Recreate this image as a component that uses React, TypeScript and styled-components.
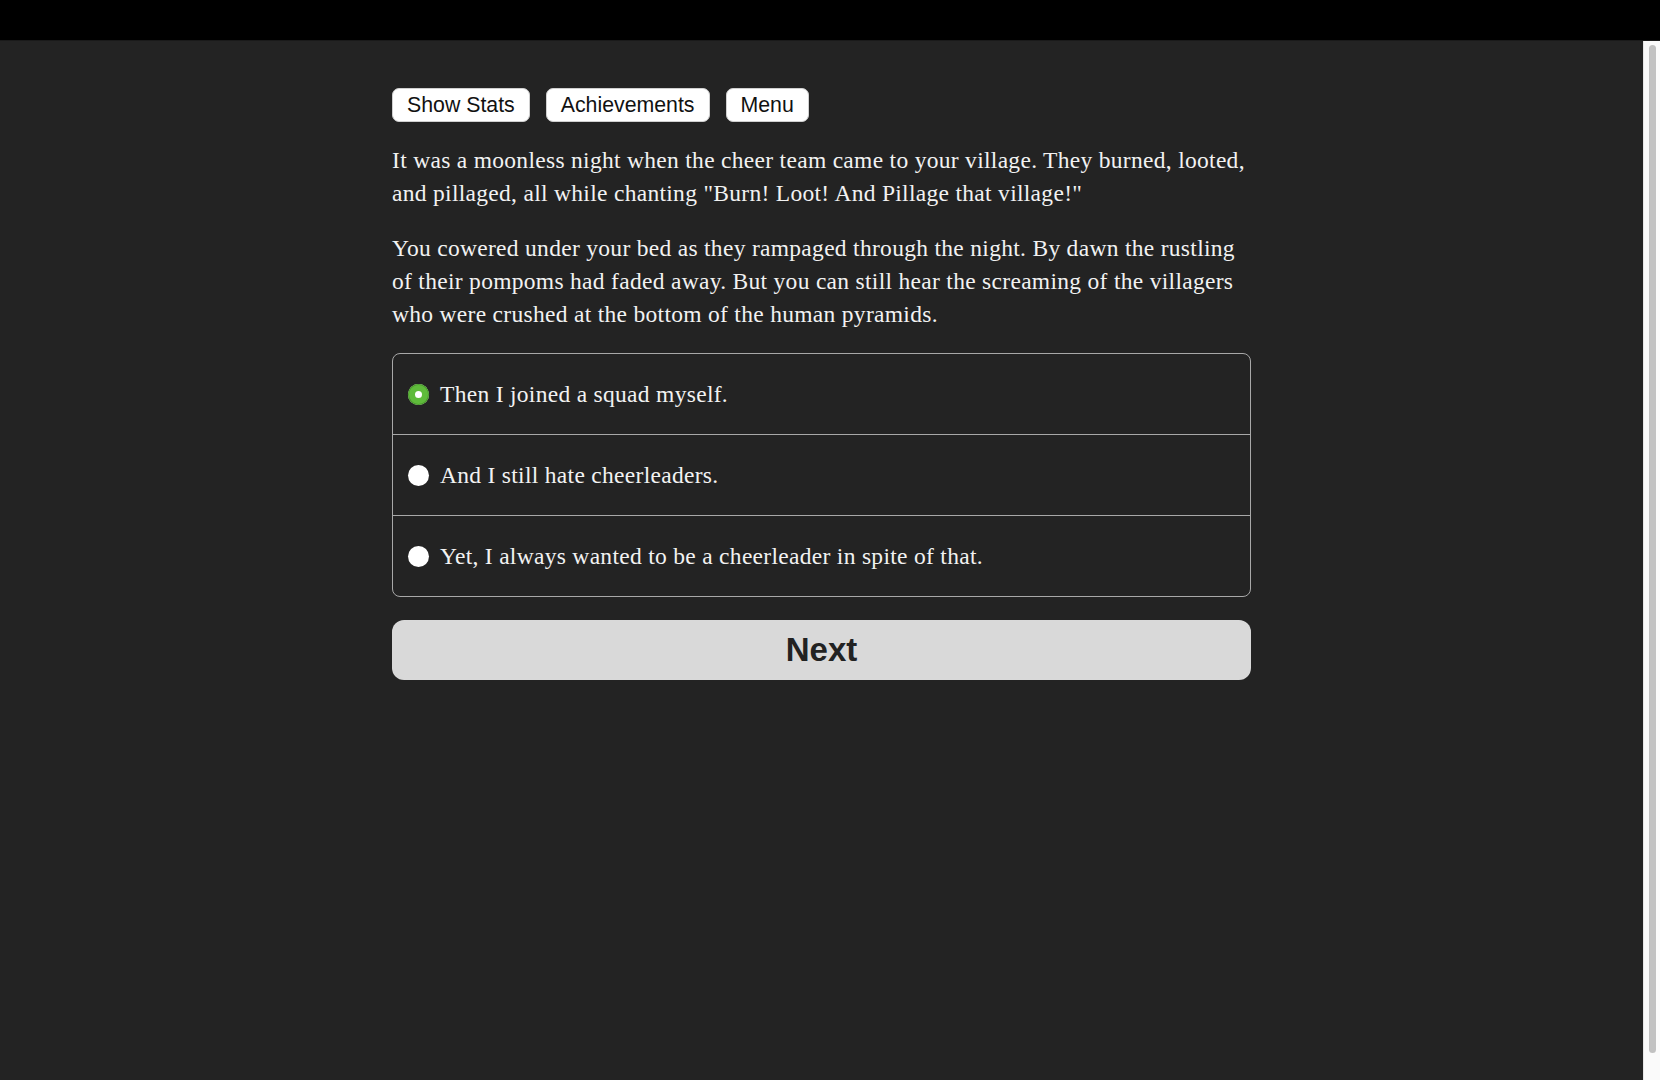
import React, { useState } from "react";
import styled, { createGlobalStyle } from "styled-components";

const GlobalStyle = createGlobalStyle`
  html, body {
    margin: 0;
    padding: 0;
    height: 100%;
    overflow: hidden;
    background: #000;
  }
  #root {
    height: 100%;
  }
  * {
    box-sizing: border-box;
  }
`;

const Shell = styled.div`
  display: flex;
  flex-direction: column;
  height: 100vh;
`;

const TopBar = styled.div`
  flex: 0 0 41px;
  background: #000;
  border-bottom: 1px solid #1a1a1a;
`;

const Viewport = styled.div`
  flex: 1 1 auto;
  display: flex;
  min-height: 0;
`;

const Scroller = styled.div`
  flex: 1 1 auto;
  overflow: hidden;
  background: #232323;
`;

const ScrollTrack = styled.div`
  flex: 0 0 17px;
  display: flex;
  flex-direction: column;
  padding: 4px 4px 27px 5px;
  background: #fafafa;
  border-left: 1px solid #e6e6e6;
`;

const ScrollThumb = styled.div`
  flex: 1 1 auto;
  background: #c1c1c1;
  border-radius: 4px;
`;

const Page = styled.main`
  width: 859px;
  margin: 0 auto;
  padding-top: 47px;
  color: #f2f2f2;
  font-family: "Liberation Serif", "Times New Roman", serif;
  font-size: 23.5px;
  letter-spacing: 0.3px;
  line-height: 33px;
`;

const Toolbar = styled.nav`
  display: flex;
  gap: 16px;
  margin-bottom: 22px;
`;

const ToolButton = styled.button`
  height: 34px;
  padding: 0 14px;
  background: #fff;
  color: #111;
  border: 1px solid #d0d0d0;
  border-radius: 7px;
  font-family: "Liberation Sans", Arial, sans-serif;
  font-size: 21.3px;
  letter-spacing: 0;
  line-height: 32px;
  cursor: pointer;
`;

const Paragraph = styled.p`
  margin: 0 0 22px;
`;

const Choices = styled.div`
  display: flex;
  flex-direction: column;
  border: 1px solid #a8a8a8;
  border-radius: 8px;
  overflow: hidden;
`;

const ChoiceRow = styled.label<{ $first?: boolean }>`
  display: flex;
  align-items: center;
  gap: 11px;
  height: ${(p) => (p.$first ? "80px" : "81px")};
  padding-left: 15px;
  border-top: ${(p) => (p.$first ? "none" : "1px solid #a8a8a8")};
  cursor: pointer;
`;

const Radio = styled.input`
  appearance: none;
  -webkit-appearance: none;
  margin: 0;
  flex: 0 0 21px;
  width: 21px;
  height: 21px;
  border-radius: 50%;
  background: #fff;
  cursor: pointer;

  &:checked {
    background: #fff;
    box-shadow: inset 0 0 0 1px #4b9a2e, inset 0 0 0 7px #5fbb3b;
  }
`;

const ChoiceText = styled.span`
  color: #f2f2f2;
`;

const NextButton = styled.button`
  display: block;
  width: 100%;
  height: 60px;
  margin-top: 23px;
  background: #d9d9d9;
  color: #222;
  border: none;
  border-radius: 12px;
  font-family: "Liberation Sans", Arial, sans-serif;
  font-weight: 700;
  font-size: 33px;
  letter-spacing: 0;
  cursor: pointer;
`;

const choices = [
  "Then I joined a squad myself.",
  "And I still hate cheerleaders.",
  "Yet, I always wanted to be a cheerleader in spite of that.",
];

export default function App() {
  const [selected, setSelected] = useState(0);
  return (
    <>
      <GlobalStyle />
      <Shell>
        <TopBar />
        <Viewport>
          <Scroller>
            <Page>
              <Toolbar>
                <ToolButton>Show Stats</ToolButton>
                <ToolButton>Achievements</ToolButton>
                <ToolButton>Menu</ToolButton>
              </Toolbar>
              <Paragraph>
                It was a moonless night when the cheer team came to your
                village. They burned, looted, and pillaged, all while chanting
                "Burn! Loot! And Pillage that village!"
              </Paragraph>
              <Paragraph>
                You cowered under your bed as they rampaged through the night.
                By dawn the rustling of their pompoms had faded away. But you can
                still hear the screaming of the villagers who were crushed at the
                bottom of the human pyramids.
              </Paragraph>
              <Choices>
                {choices.map((c, i) => (
                  <ChoiceRow key={c} $first={i === 0}>
                    <Radio
                      type="radio"
                      name="choice"
                      checked={selected === i}
                      onChange={() => setSelected(i)}
                    />
                    <ChoiceText>{c}</ChoiceText>
                  </ChoiceRow>
                ))}
              </Choices>
              <NextButton>Next</NextButton>
            </Page>
          </Scroller>
          <ScrollTrack>
            <ScrollThumb />
          </ScrollTrack>
        </Viewport>
      </Shell>
    </>
  );
}
